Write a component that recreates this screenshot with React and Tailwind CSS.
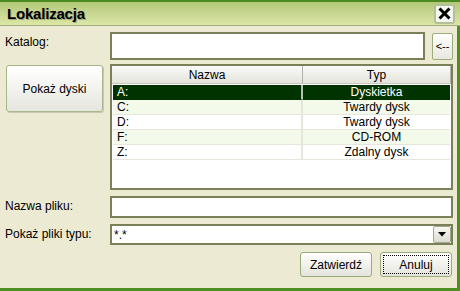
import React from "react";

const rows = [
  { n: "A:", t: "Dyskietka", sel: true },
  { n: "C:", t: "Twardy dysk", alt: true },
  { n: "D:", t: "Twardy dysk" },
  { n: "F:", t: "CD-ROM", alt: true },
  { n: "Z:", t: "Zdalny dysk" },
];

export default function App() {
  return (
    <div
      className="w-[460px] h-[291px] flex flex-col bg-[#ecead2] text-black text-[12px] leading-none overflow-hidden"
      style={{ fontFamily: '"Liberation Sans", Arial, sans-serif' }}
    >
      {/* title bar */}
      <div className="h-[26px] shrink-0 flex items-center justify-between border-t-2 border-[#4b8a1e] border-b border-b-[#a9a884] bg-gradient-to-b from-[#b3c87a] to-[#dbe7a6] pl-[7px] pr-[5px]">
        <span className="text-[15px] font-bold tracking-[-0.2px] [text-shadow:1px_1px_0_#9aa57a]">Lokalizacja</span>
        <div className="w-[21px] h-[20px] rounded-[3px] border-2 border-[#b2c09a] bg-[#f4f6ee] flex items-center justify-center">
          <svg width="13" height="13" viewBox="0 0 13 13">
            <path d="M1.5 1.5 L11.5 11.5 M11.5 1.5 L1.5 11.5" stroke="#000" strokeWidth="3" />
          </svg>
        </div>
      </div>

      {/* body */}
      <div className="flex-1 flex flex-col border-r-[3px] border-r-[#4e8f22] border-b-[3px] border-b-[#4e8f22] pl-[5px] pr-[4px] pt-[6px]">
        {/* Katalog row */}
        <div className="flex items-start h-[28px]">
          <div className="w-[105px] pt-[4px]">Katalog:</div>
          <div className="w-[315px] h-[28px] bg-white border-2 border-[#7a8058]"></div>
          <div className="ml-[7px] mt-[1px] w-[21px] h-[27px] rounded-[2px] border border-[#9cac7c] bg-gradient-to-b from-white to-[#e8e8e0] flex items-center justify-center text-[11px]">
            &lt;--
          </div>
        </div>

        {/* drives / table row */}
        <div className="flex items-start mt-[4px]">
          <div className="w-[105px] pl-[1px] pt-[1px]">
            <div className="w-[97px] h-[47px] rounded-[3px] border border-[#a9b58c] bg-gradient-to-b from-white to-[#e6e6de] shadow-[1px_1px_0_#c9c9b0] flex items-center justify-center text-[12px]">
              Pokaż dyski
            </div>
          </div>
          <div className="w-[343px] h-[126px] bg-white border-2 border-[#7a8058] flex flex-col">
            <div className="h-[18px] flex bg-gradient-to-b from-[#fafaf8] to-[#e4e4dc] border-b border-[#c8c8bc]">
              <div className="w-[191px] flex items-center justify-center pt-[1px] border-r border-[#b0b0a8]">Nazwa</div>
              <div className="flex-1 flex items-center justify-center pt-[1px] border-r border-[#b0b0a8]">Typ</div>
            </div>
            <div className="px-[1px] pt-[1px]">
              {rows.map((r) => (
                <div
                  key={r.n}
                  className={
                    "h-[15px] flex " +
                    (r.sel
                      ? "bg-[#003300] text-white"
                      : r.alt
                      ? "bg-[#f3faea] text-black"
                      : "bg-white text-black")
                  }
                >
                  <div className={"w-[190px] pl-[4px] flex items-center border-r-2 border-b " + (r.sel ? "border-white/70 border-b-[#003300]" : "border-[#e6e6dc]")}>
                    {r.n}
                  </div>
                  <div className={"flex-1 flex items-center justify-center border-b " + (r.sel ? "border-b-[#003300]" : "border-[#e6e6dc]")}>
                    {r.t}
                  </div>
                </div>
              ))}
            </div>
          </div>
        </div>

        {/* Nazwa pliku */}
        <div className="flex items-center mt-[6px] h-[22px]">
          <div className="w-[105px] pb-[2px]">Nazwa pliku:</div>
          <div className="w-[343px] h-[22px] bg-white border-2 border-[#7a8058]"></div>
        </div>

        {/* Pokaż pliki typu */}
        <div className="flex items-center mt-[6px] h-[21px]">
          <div className="w-[105px] pb-[1px]">Pokaż pliki typu:</div>
          <div className="w-[343px] h-[21px] bg-white border-2 border-[#7a8058] flex items-center justify-between pl-[2px] pr-[0px]">
            <span className="pt-[1px]">*.*</span>
            <div className="w-[18px] h-[17px] rounded-[2px] border border-[#a6a690] bg-gradient-to-b from-[#f8f8f2] to-[#dcdcd0] flex items-center justify-center">
              <svg width="8" height="5" viewBox="0 0 8 5">
                <path d="M0 0 H8 L4 4.5 Z" fill="#000" />
              </svg>
            </div>
          </div>
        </div>

        {/* buttons */}
        <div className="flex justify-end gap-[8px] mt-[7px] pr-[1px]">
          <div className="w-[72px] h-[25px] rounded-[3px] border border-[#9aab7a] bg-gradient-to-b from-white to-[#e4e4dc] flex items-center justify-center">
            Zatwierdź
          </div>
          <div className="w-[72px] h-[25px] rounded-[3px] border border-[#9aab7a] bg-gradient-to-b from-white to-[#e4e4dc] p-[2px]">
            <div className="w-full h-full border border-dotted border-black flex items-center justify-center">
              Anuluj
            </div>
          </div>
        </div>
      </div>
    </div>
  );
}
